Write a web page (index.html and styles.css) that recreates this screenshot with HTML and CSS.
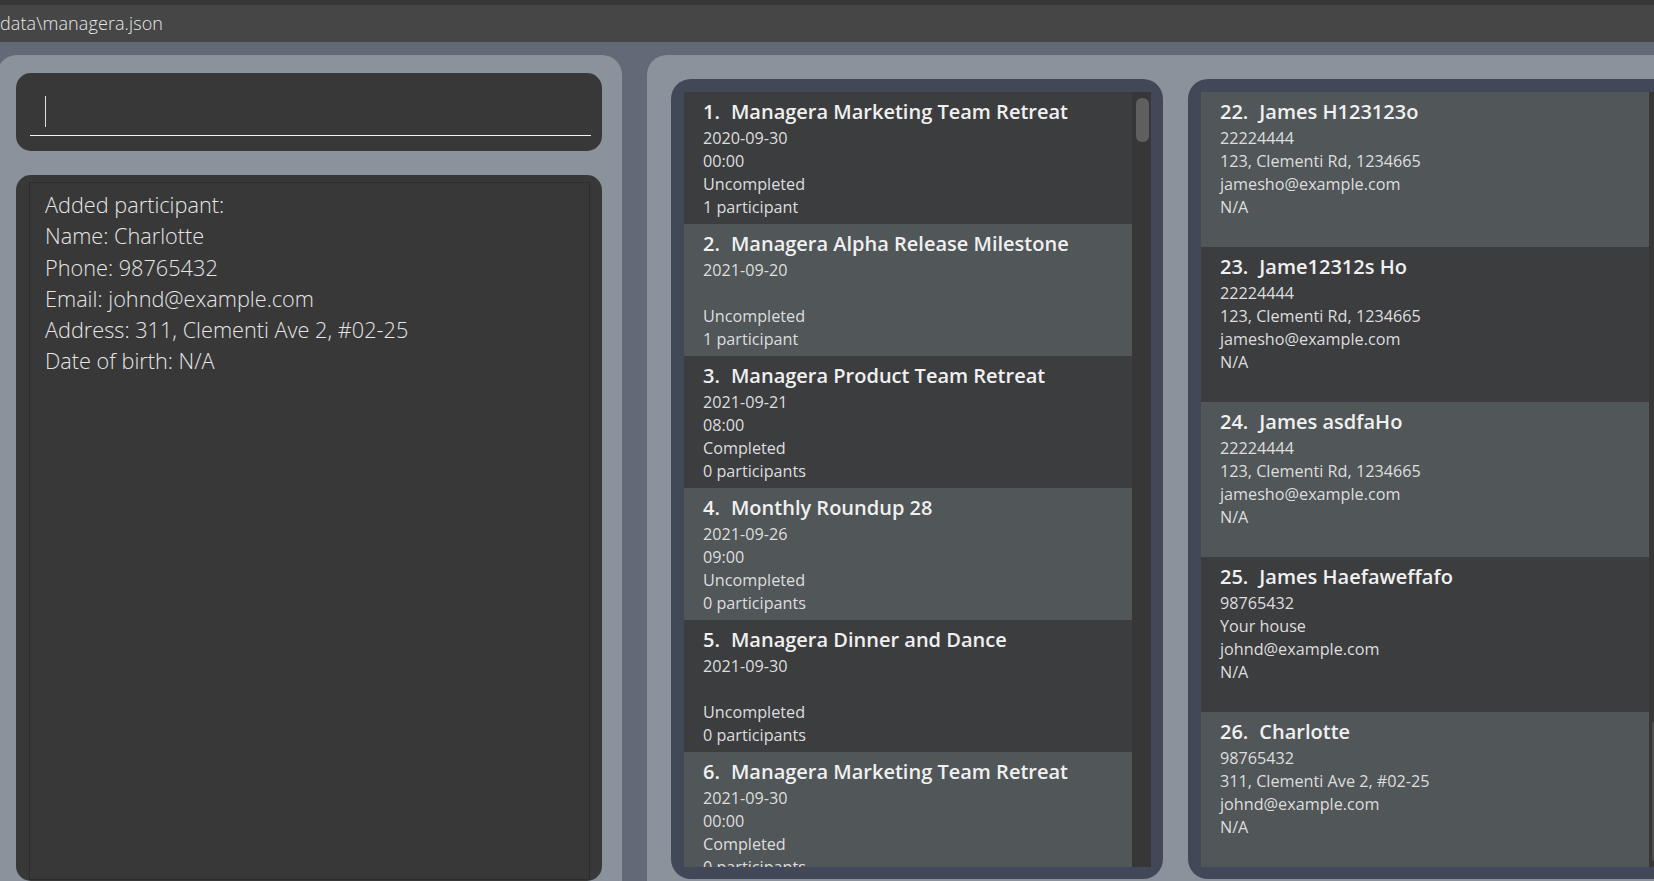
FILE: index.html
```html
<!DOCTYPE html>
<html lang="en">
<head>
<meta charset="utf-8">
<title>Managera</title>
<link rel="stylesheet" href="styles.css">
</head>
<body>
<div class="topstrip"></div>
<div class="statusbar">data\managera.json</div>
<div class="main">
  <section class="left-panel">
    <div class="cmd-box">
      <div class="cmd-input"><span class="caret"></span></div>
    </div>
    <div class="result-box">
      <div class="result-inner">
        <div>Added participant:</div>
        <div>Name: Charlotte</div>
        <div>Phone: 98765432</div>
        <div>Email: johnd@example.com</div>
        <div>Address: 311, Clementi Ave 2, #02-25</div>
        <div>Date of birth: N/A</div>
      </div>
    </div>
  </section>
  <section class="right-panel">
    <div class="list-box events">
      <div class="list">
        <div class="card dark">
          <div class="title"><span class="idx">1.</span>Managera Marketing Team Retreat</div>
          <div class="line">2020-09-30</div>
          <div class="line">00:00</div>
          <div class="line">Uncompleted</div>
          <div class="line">1 participant</div>
        </div>
        <div class="card light">
          <div class="title"><span class="idx">2.</span>Managera Alpha Release Milestone</div>
          <div class="line">2021-09-20</div>
          <div class="line">&nbsp;</div>
          <div class="line">Uncompleted</div>
          <div class="line">1 participant</div>
        </div>
        <div class="card dark">
          <div class="title"><span class="idx">3.</span>Managera Product Team Retreat</div>
          <div class="line">2021-09-21</div>
          <div class="line">08:00</div>
          <div class="line">Completed</div>
          <div class="line">0 participants</div>
        </div>
        <div class="card light">
          <div class="title"><span class="idx">4.</span>Monthly Roundup 28</div>
          <div class="line">2021-09-26</div>
          <div class="line">09:00</div>
          <div class="line">Uncompleted</div>
          <div class="line">0 participants</div>
        </div>
        <div class="card dark">
          <div class="title"><span class="idx">5.</span>Managera Dinner and Dance</div>
          <div class="line">2021-09-30</div>
          <div class="line">&nbsp;</div>
          <div class="line">Uncompleted</div>
          <div class="line">0 participants</div>
        </div>
        <div class="card light">
          <div class="title"><span class="idx">6.</span>Managera Marketing Team Retreat</div>
          <div class="line">2021-09-30</div>
          <div class="line">00:00</div>
          <div class="line">Completed</div>
          <div class="line">0 participants</div>
        </div>
      </div>
      <div class="track"><div class="thumb event-thumb"></div></div>
    </div>
    <div class="list-box persons">
      <div class="list">
        <div class="card person light">
          <div class="title"><span class="idx">22.</span>James H123123o</div>
          <div class="line">22224444</div>
          <div class="line">123, Clementi Rd, 1234665</div>
          <div class="line">jamesho@example.com</div>
          <div class="line">N/A</div>
        </div>
        <div class="card person dark">
          <div class="title"><span class="idx">23.</span>Jame12312s Ho</div>
          <div class="line">22224444</div>
          <div class="line">123, Clementi Rd, 1234665</div>
          <div class="line">jamesho@example.com</div>
          <div class="line">N/A</div>
        </div>
        <div class="card person light">
          <div class="title"><span class="idx">24.</span>James asdfaHo</div>
          <div class="line">22224444</div>
          <div class="line">123, Clementi Rd, 1234665</div>
          <div class="line">jamesho@example.com</div>
          <div class="line">N/A</div>
        </div>
        <div class="card person dark">
          <div class="title"><span class="idx">25.</span>James Haefaweffafo</div>
          <div class="line">98765432</div>
          <div class="line">Your house</div>
          <div class="line">johnd@example.com</div>
          <div class="line">N/A</div>
        </div>
        <div class="card person light">
          <div class="title"><span class="idx">26.</span>Charlotte</div>
          <div class="line">98765432</div>
          <div class="line">311, Clementi Ave 2, #02-25</div>
          <div class="line">johnd@example.com</div>
          <div class="line">N/A</div>
        </div>
      </div>
      <div class="track"><div class="thumb person-thumb"></div></div>
    </div>
  </section>
</div>
</body>
</html>
```
FILE: styles.css
```css
* { box-sizing: border-box; }

html, body {
  margin: 0;
  padding: 0;
  width: 1654px;
  height: 881px;
  overflow: hidden;
  background: #626a78;
  font-family: "Open Sans", "Noto Sans", "DejaVu Sans", sans-serif;
}

.topstrip {
  height: 5px;
  background: #383838;
}

.statusbar {
  height: 37px;
  background: #464646;
  color: #e6e6e6;
  font-size: 18px;
  font-weight: 300;
  letter-spacing: 0.1px;
  line-height: 37px;
  white-space: nowrap;
}

.main {
  display: flex;
  gap: 25px;
  margin-left: -3px;
  padding-top: 13px;
  height: 839px;
}

.left-panel {
  width: 625px;
  flex: none;
  background: #8a929c;
  border-radius: 20px 20px 0 0;
  padding: 18px 20px 0 19px;
  display: flex;
  flex-direction: column;
  gap: 24px;
}

.cmd-box {
  height: 78px;
  background: #383838;
  border-radius: 15px;
  padding: 0 11px 0 14px;
}

.cmd-input {
  height: 63px;
  border-bottom: 1px solid #f4f4f4;
  padding: 23px 0 0 15px;
}

.caret {
  display: block;
  width: 1px;
  height: 31px;
  background: #e0e0e0;
}

.result-box {
  height: 706px;
  flex: none;
  background: #383838;
  border-radius: 15px;
  padding: 7px 12px 1px 13px;
}

.result-inner {
  height: 100%;
  border: 1px solid #2c2c2c;
  padding: 6px 15px;
  color: #e6e6e6;
  font-size: 21.7px;
  font-weight: 300;
  line-height: 31.3px;
}

.right-panel {
  flex: 1;
  background: #8a929c;
  border-radius: 20px 0 0 0;
  padding: 24px 0 0 24px;
  display: flex;
  gap: 25px;
  overflow: hidden;
}

.list-box {
  width: 492px;
  height: 800px;
  flex: none;
  background: #414857;
  border-radius: 20px;
  padding: 13px 12px 12px 13px;
  display: flex;
}

.list {
  width: 448px;
  flex: none;
  overflow: hidden;
}

.track {
  flex: 1;
  background: #373737;
}

.thumb {
  background: #5f5f5f;
  border-radius: 6px;
}

.event-thumb {
  margin: 6px 2px 0 4px;
  height: 44px;
}

.person-thumb {
  margin: 630px 0 0 3px;
  height: 139px;
  background: #4e4e4e;
  border-radius: 2px;
}

.card {
  height: 132px;
  padding: 5px 10px 0 19px;
  color: #dedede;
}

.card.person {
  height: 155px;
}

.card.dark { background: #3c3d3f; }
.card.light { background: #515658; }

.title {
  font-size: 20px;
  font-weight: 600;
  line-height: 30px;
  color: #f0f0f0;
  white-space: nowrap;
}

.idx {
  margin-right: 11px;
}

.line {
  font-size: 16.2px;
  line-height: 23px;
  white-space: nowrap;
}
```
